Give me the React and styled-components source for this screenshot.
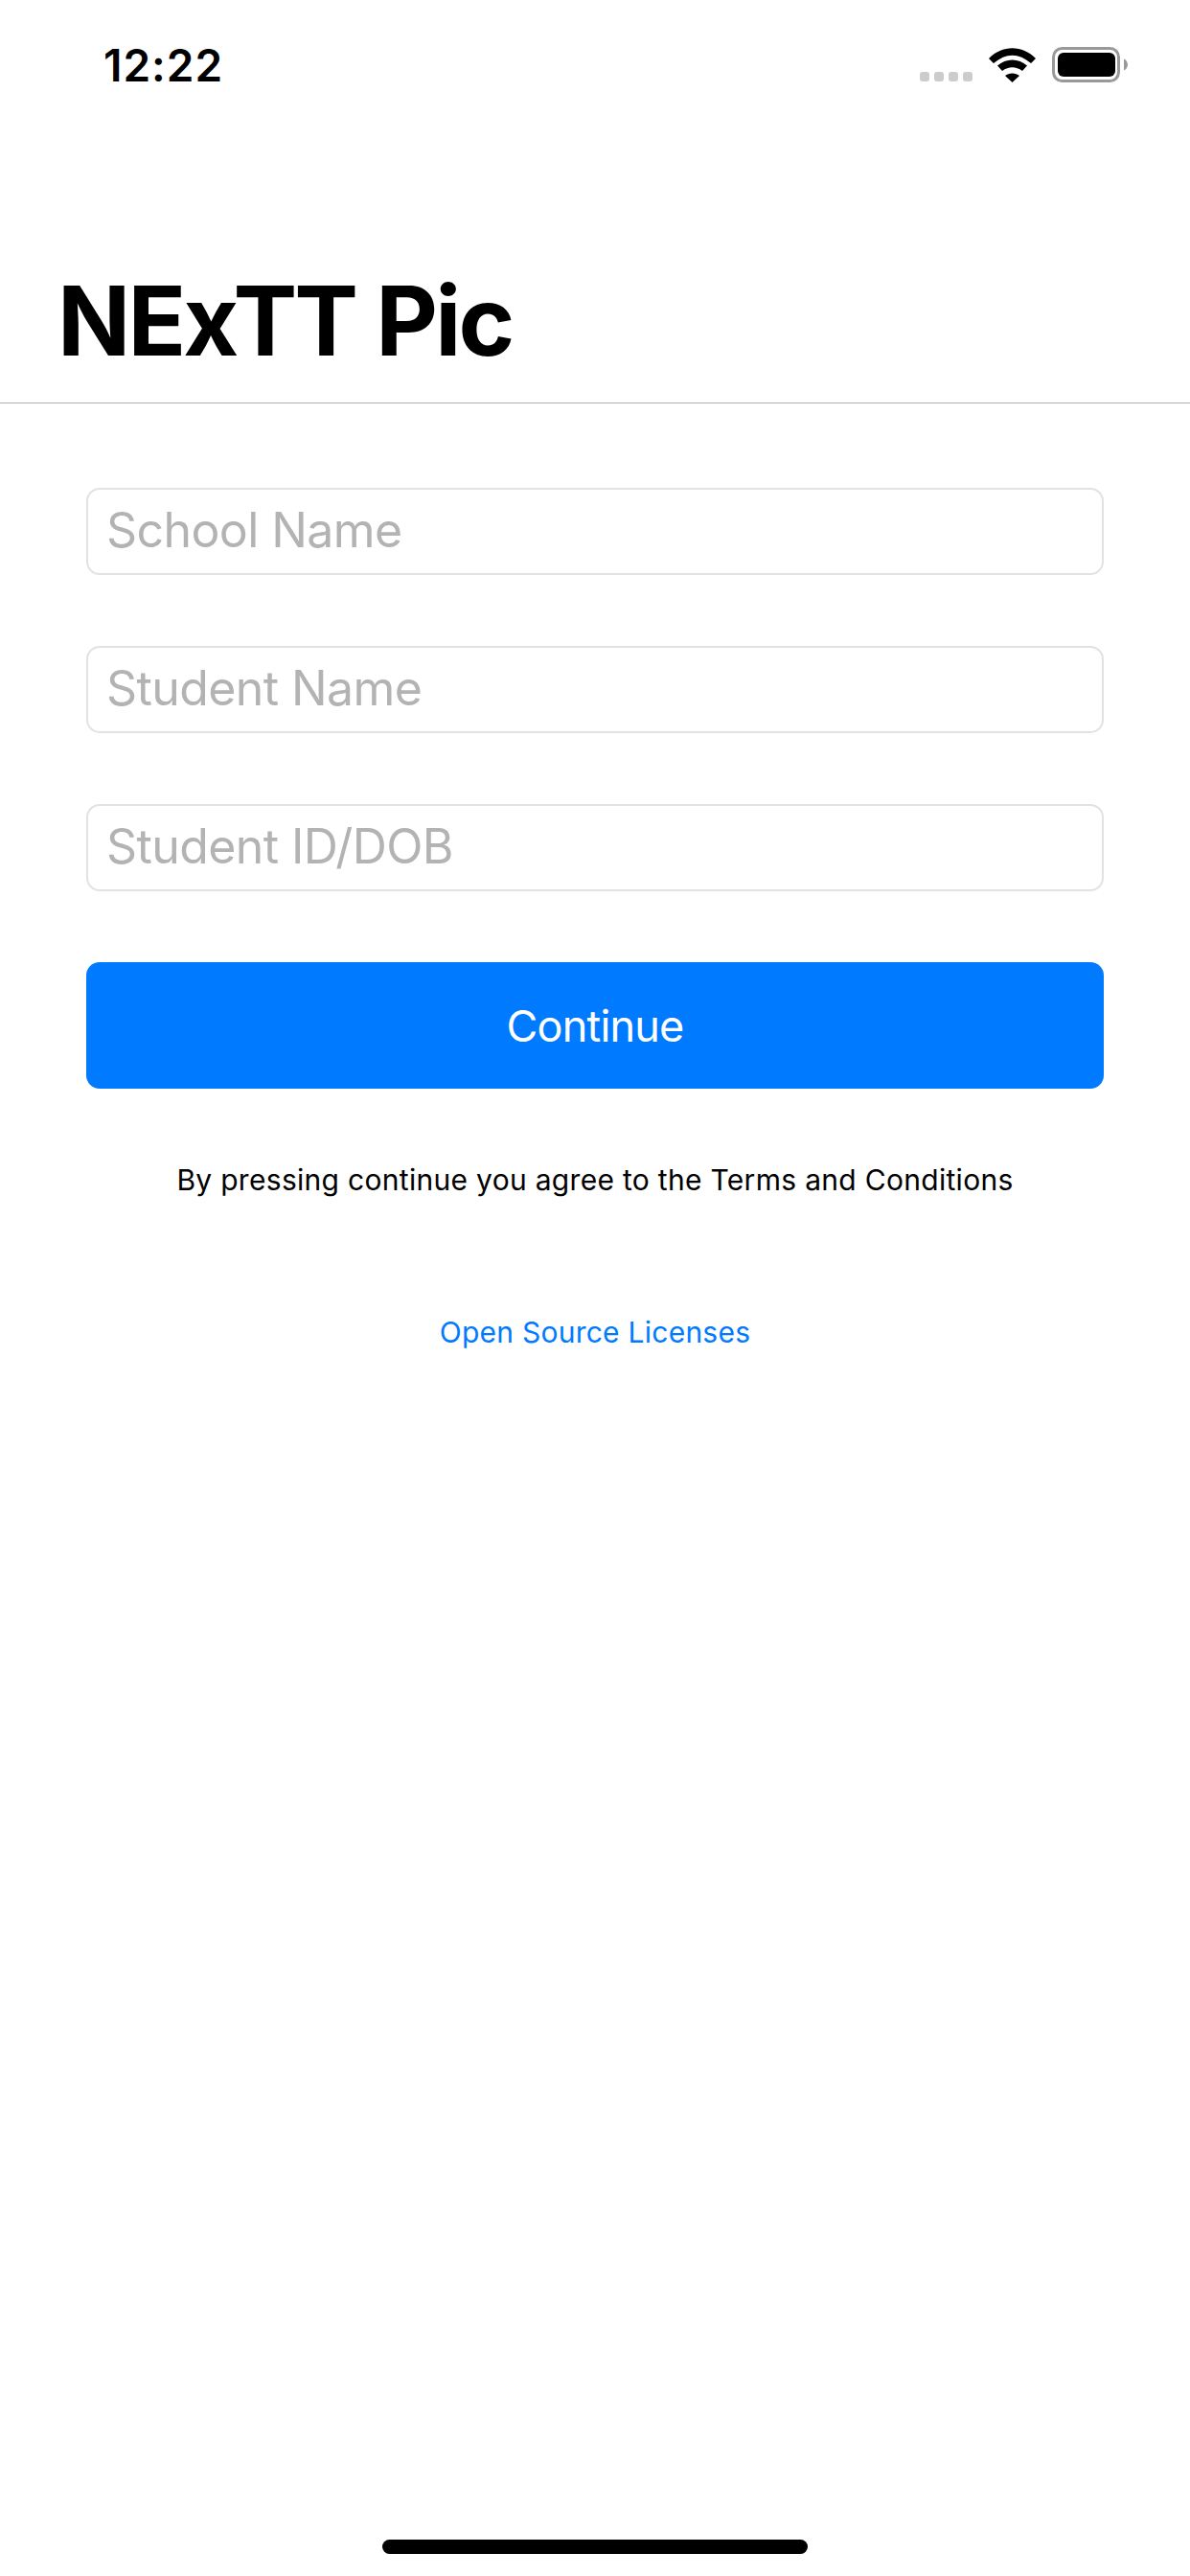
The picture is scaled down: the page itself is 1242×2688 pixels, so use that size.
import styled, { createGlobalStyle } from "styled-components";

const Global = createGlobalStyle`
html, body {
  margin: 0;
  padding: 0;
  background: #fff;
}
* { box-sizing: border-box; }
`

const Page = styled.div`
width: 1242px;
height: 2688px;
display: flex;
flex-direction: column;
position: relative;
background: #fff;
font-family: Inter, "Liberation Sans", sans-serif;
color: #000;
`

const StatusBar = styled.div`
height: 135px;
padding: 0 65px 0 108px;
display: flex;
justify-content: space-between;
align-items: center;
`

const Clock = styled.span`
font-size: 46px;
font-weight: 600;
letter-spacing: 1px;
`

const StatusIcons = styled.div`
display: flex;
align-items: center;
gap: 17px;
`

const Signal = styled.div`
display: flex;
gap: 5px;
margin-top: 25px;
`

const SignalDot = styled.i`
width: 10px;
height: 10px;
border-radius: 3px;
background: #ccc;
`

const Header = styled.header`
height: 286px;
padding: 138px 0 0 60px;
border-bottom: 1px solid #b2b2b2;
`

const Title = styled.h1`
margin: 0;
font-size: 100px;
line-height: 124px;
font-weight: 700;
letter-spacing: -2.8px;
`

const Form = styled.div`
padding: 88px 90px 0;
display: flex;
flex-direction: column;
`

const Input = styled.input`
width: 100%;
height: 91px;
margin-bottom: 74px;
padding: 0 19px 3px;
border: 2px solid #e2e2e2;
border-radius: 14px;
background: #fff;
font: 400 50px Inter, "Liberation Sans", sans-serif;
letter-spacing: -0.6px;
outline: none;
&::placeholder {
  color: #b3b3b3;
  opacity: 1;
}
`

const Button = styled.button`
height: 132px;
border: 0;
border-radius: 14px;
background: #007aff;
color: #fff;
font: 400 45px Inter, "Liberation Sans", sans-serif;
letter-spacing: -0.8px;
`

const Terms = styled.p`
margin: 0;
padding-top: 75px;
text-align: center;
font-size: 30px;
line-height: 40px;
letter-spacing: 0.3px;
`

const Licenses = styled.a`
display: block;
padding-top: 119px;
text-align: center;
font-size: 30px;
line-height: 40px;
letter-spacing: 0.25px;
color: #007aff;
`

const HomeBar = styled.div`
position: absolute;
left: 399px;
bottom: 23px;
width: 444px;
height: 15px;
border-radius: 8px;
background: #000;
`

const fields = ["School Name", "Student Name", "Student ID/DOB"];

const App = () => {
    return (
        <Page>
            <Global />
            <StatusBar>
                <Clock>12:22</Clock>
                <StatusIcons>
                    <Signal>
                        {[0, 1, 2, 3].map((idx) => <SignalDot key={idx} />)}
                    </Signal>
                    <svg width="49" height="36" viewBox="0 0 49 36">
                        <path d="M0 11 C14 -3.500 35 -3.500 49 11 L44 16 C31 5 18 5 5 16 Z" fill="#000" />
                        <path d="M9 18.500 C18 10.500 31 10.500 40 18.500 L35 24 C28 19 21 19 14 24 Z" fill="#000" />
                        <path d="M17 29 C21 25.500 28 25.500 32 29 L24.500 36 Z" fill="#000" />
                    </svg>
                    <svg width="79" height="37" viewBox="0 0 79 37">
                        <rect x="1.500" y="1.500" width="68" height="34" rx="9" fill="none" stroke="#999" strokeWidth="3" />
                        <rect x="6" y="6" width="60" height="25" rx="6" fill="#000" />
                        <path d="M75 12.500 C77.500 13.500 79 16 79 18.500 C79 21 77.500 23.500 75 24.500 Z" fill="#999" />
                    </svg>
                </StatusIcons>
            </StatusBar>
            <Header>
                <Title>NExTT Pic</Title>
            </Header>
            <Form>
                {fields.map((itm) => <Input key={itm} placeholder={itm} readOnly />)}
                <Button>Continue</Button>
            </Form>
            <Terms>By pressing continue you agree to the Terms and Conditions</Terms>
            <Licenses>Open Source Licenses</Licenses>
            <HomeBar />
        </Page>
    )
}

export default App;
